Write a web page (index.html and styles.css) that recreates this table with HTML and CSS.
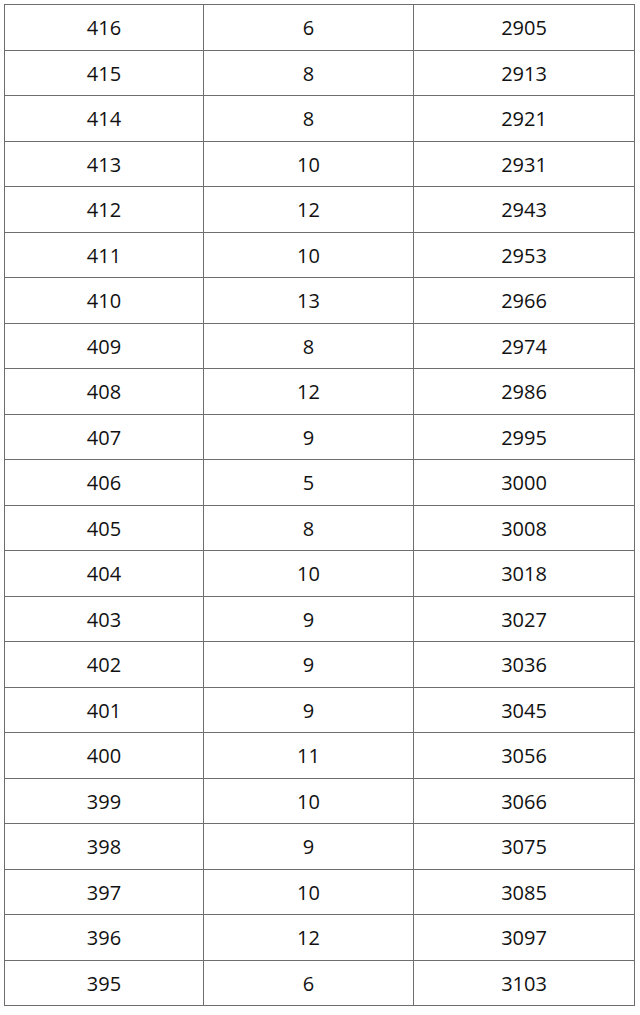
FILE: index.html
```html
<!DOCTYPE html>
<html lang="zh">
<head>
<meta charset="utf-8">
<title>Table</title>
<link rel="stylesheet" href="styles.css">
</head>
<body>
<table class="score-table">
  <colgroup>
    <col class="c1">
    <col class="c2">
    <col class="c3">
  </colgroup>
  <tbody>
    <tr><td>416</td><td>6</td><td>2905</td></tr>
    <tr><td>415</td><td>8</td><td>2913</td></tr>
    <tr><td>414</td><td>8</td><td>2921</td></tr>
    <tr><td>413</td><td>10</td><td>2931</td></tr>
    <tr><td>412</td><td>12</td><td>2943</td></tr>
    <tr><td>411</td><td>10</td><td>2953</td></tr>
    <tr><td>410</td><td>13</td><td>2966</td></tr>
    <tr><td>409</td><td>8</td><td>2974</td></tr>
    <tr><td>408</td><td>12</td><td>2986</td></tr>
    <tr><td>407</td><td>9</td><td>2995</td></tr>
    <tr><td>406</td><td>5</td><td>3000</td></tr>
    <tr><td>405</td><td>8</td><td>3008</td></tr>
    <tr><td>404</td><td>10</td><td>3018</td></tr>
    <tr><td>403</td><td>9</td><td>3027</td></tr>
    <tr><td>402</td><td>9</td><td>3036</td></tr>
    <tr><td>401</td><td>9</td><td>3045</td></tr>
    <tr><td>400</td><td>11</td><td>3056</td></tr>
    <tr><td>399</td><td>10</td><td>3066</td></tr>
    <tr><td>398</td><td>9</td><td>3075</td></tr>
    <tr><td>397</td><td>10</td><td>3085</td></tr>
    <tr><td>396</td><td>12</td><td>3097</td></tr>
    <tr><td>395</td><td>6</td><td>3103</td></tr>
  </tbody>
</table>
</body>
</html>
```

FILE: styles.css
```css
html, body {
  margin: 0;
  padding: 0;
  background: #ffffff;
}

body {
  padding: 4px 0 0 4px;
}

.score-table {
  border-collapse: collapse;
  table-layout: fixed;
  width: 630px;
  height: 1002px;
  font-family: "Open Sans", "Noto Sans", "Liberation Sans", sans-serif;
  font-size: 20px;
  color: #111111;
}

.c1 { width: 199px; }
.c2 { width: 210px; }
.c3 { width: 221px; }

.score-table td {
  border: 1px solid #6e6e6e;
  padding: 2px 0 0 0;
  text-align: center;
  vertical-align: middle;
  line-height: 1;
}
```
